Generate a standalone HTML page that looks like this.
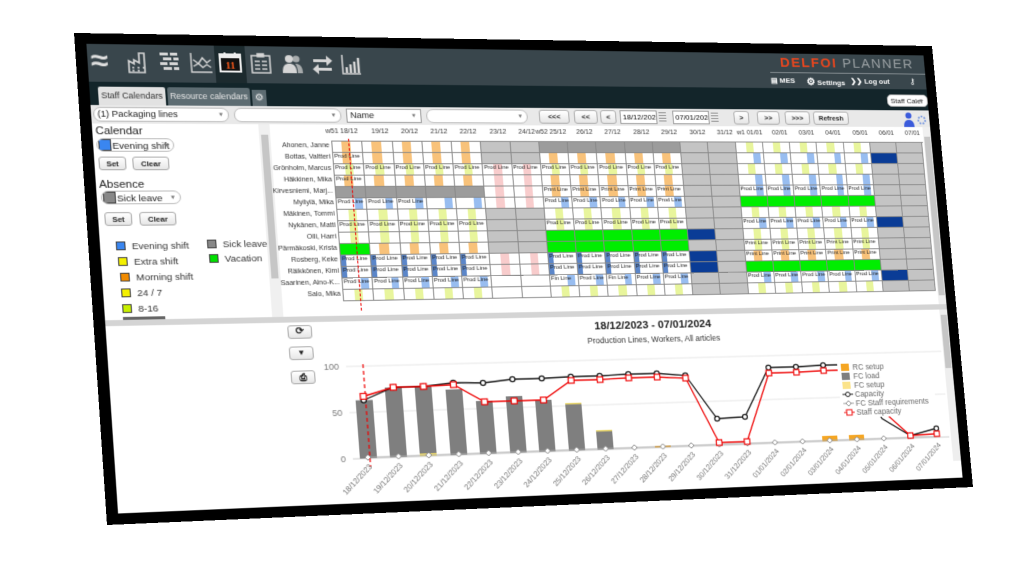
<!DOCTYPE html>
<html><head><meta charset="utf-8">
<style>
html,body{margin:0;padding:0;width:1024px;height:562px;overflow:hidden;background:#fff;font-family:"Liberation Sans",sans-serif}
#c{position:absolute;left:0;top:0;width:900px;height:500px;background:#000;transform-origin:0 0;
transform:matrix3d(1.07178,0.02029,0,0.00012709,0.062864,0.968614,0,-0.000029306,0,0,1,0,74,33,0,1)}
.ab{position:absolute}
#in{position:absolute;left:11px;top:11px;width:878px;height:478px;background:#fff;overflow:hidden}
.dd{position:absolute;background:#fff;border:1px solid #bbb;border-radius:7px;font-size:9px;line-height:13px;padding-left:3px;box-sizing:border-box;color:#222;white-space:nowrap;overflow:hidden}
.dd:after{content:"▾";position:absolute;right:5px;top:0;font-size:7px;color:#777}
.bt{position:absolute;background:linear-gradient(#fff,#e6e6e6);border:1px solid #aaa;border-radius:3px;font-size:7.5px;font-weight:bold;text-align:center;box-sizing:border-box;line-height:13px;color:#222}
.gr{position:absolute;left:242px;top:110px;width:636px;overflow:hidden}
.r{display:grid;grid-template-columns:repeat(21,30.25px);height:12px}
.r i{display:block;width:30.25px;min-width:0;height:12px;box-sizing:border-box;border-right:1px solid #888;border-bottom:1px solid #888;font-style:normal;font-size:6px;line-height:9px;overflow:hidden;white-space:nowrap;color:#222;background:#fff;padding-left:1px}
.r i.a{background:linear-gradient(90deg,#fff 30%,#f8c27a 30%,#f8c27a 62%,#fff 62%)}
.r i.y{background:linear-gradient(90deg,#fff 38%,#e8f59c 38%,#e8f59c 66%,#fff 66%)}
.r i.b{background:linear-gradient(90deg,#fff 62%,#98bdf0 62%,#98bdf0 88%,#fff 88%)}
.r i.p{background:linear-gradient(90deg,#fff 38%,#f8cccc 38%,#f8cccc 66%,#fff 66%)}
.r i.n.t{background:linear-gradient(90deg,#5b86c9 18%,#fff 18%)}
.r i.g{background:#c4c4c4}
.r i.d{background:#9c9c9c}
.r i.v{background:#00ee00}
.r i.n{background:#0a3c96}
.nm{position:absolute;left:170px;width:70px;text-align:right;font-size:7px;color:#333;line-height:12px;white-space:nowrap}
.hd{position:absolute;top:97px;font-size:7px;color:#333;white-space:nowrap}
.lg{position:absolute;font-size:9.5px;color:#333;line-height:11px;white-space:nowrap}
.lg b{display:inline-block;width:7px;height:7px;border:1px solid #444;margin-right:6px;vertical-align:-1px}
.ic{position:absolute;top:18px}
</style></head><body>
<div id="c">
<div id="in"></div>
<div class="ab" style="left:11px;top:11px;width:878px;height:39px;background:#39464c"></div>
<div class="ab" style="left:133px;top:11px;width:30px;height:39px;background:#1c2a2e"></div>
<div class="ab" style="left:11px;top:50px;width:878px;height:24px;background:#13252a"></div>
<div class="ab" style="left:14px;top:14px;font-size:30px;color:#ddd;font-weight:bold;line-height:30px">≈</div>
<svg class="ic" style="left:48px" width="22" height="24" viewBox="0 0 22 24" fill="none" stroke="#d6d6d6" stroke-width="1.6"><path d="M2 22V10l5 3V9l5 3V2h5v20z M5 17h2M10 17h2M15 17h2M5 20h2M10 20h2"/></svg>
<svg class="ic" style="left:79px" width="20" height="22" viewBox="0 0 20 22" fill="#d6d6d6"><rect x="1" y="1" width="8" height="3"/><rect x="11" y="1" width="7" height="3"/><rect x="4" y="6" width="8" height="3"/><rect x="14" y="6" width="5" height="3"/><rect x="1" y="11" width="7" height="3"/><rect x="10" y="11" width="8" height="3"/><rect x="4" y="16" width="8" height="3"/><rect x="14" y="16" width="5" height="3"/></svg>
<svg class="ic" style="left:109px" width="22" height="22" viewBox="0 0 22 22" fill="none" stroke="#d6d6d6" stroke-width="1.4"><path d="M1 1v20h20M3 8l5 4 4-6 4 5 4-3M3 15l5-3 4 4 4-3 4 3"/></svg>
<svg class="ic" style="left:137px;top:17px" width="22" height="22" viewBox="0 0 22 22"><rect x="1" y="3" width="20" height="18" fill="#111" stroke="#eee" stroke-width="2"/><rect x="1" y="3" width="20" height="4" fill="#eee"/><rect x="5" y="1" width="2" height="4" fill="#eee"/><rect x="15" y="1" width="2" height="4" fill="#eee"/><text x="11" y="18" font-size="10" font-weight="bold" fill="#ff5a1a" text-anchor="middle" font-family="Liberation Serif">11</text></svg>
<svg class="ic" style="left:168px" width="20" height="22" viewBox="0 0 20 22" fill="none" stroke="#d6d6d6" stroke-width="1.5"><rect x="1" y="3" width="18" height="18"/><rect x="7" y="1" width="6" height="3" fill="#d6d6d6"/><path d="M4 9h5M11 9h5M4 13h5M11 13h5M4 17h5M11 17h5"/></svg>
<svg class="ic" style="left:198px" width="22" height="22" viewBox="0 0 22 22" fill="#d6d6d6"><circle cx="8" cy="6" r="4"/><path d="M1 21c0-8 3-10 7-10s7 2 7 10z"/><circle cx="15" cy="6" r="3.5" opacity=".7"/><path d="M14 11c4 0 7 2 7 10h-5c0-5-1-8-2-10z" opacity=".7"/></svg>
<svg class="ic" style="left:228px" width="22" height="22" viewBox="0 0 22 22" fill="#d6d6d6"><path d="M2 6h13V2l6 5.5-6 5.5V9H2zM20 15H7v-4l-6 5.5L7 22v-4h13z"/></svg>
<svg class="ic" style="left:258px" width="20" height="22" viewBox="0 0 20 22" fill="none" stroke="#d6d6d6" stroke-width="1.5"><path d="M1 1v20h18"/><path d="M5 20v-6M9 20v-9M13 20v-12M17 20v-16" stroke-width="2.4"/></svg>
<div class="ab" style="left:724px;top:14px;font-size:15px;letter-spacing:1.6px;line-height:16px;white-space:nowrap"><span style="color:#e8461e;font-weight:bold">DELFOI</span><span style="color:#9aa0a3"> PLANNER</span></div>
<div class="ab" style="left:712px;top:32px;width:177px;height:1px;background:#8a9296"></div>
<div class="ab" style="left:712px;top:37px;font-size:8px;color:#fff;font-weight:bold;white-space:nowrap">▤ MES</div>
<div class="ab" style="left:752px;top:36px;font-size:8px;color:#fff;font-weight:bold;white-space:nowrap"><span style="font-size:11px">⚙</span> Settings</div>
<div class="ab" style="left:802px;top:37px;font-size:8px;color:#fff;font-weight:bold;white-space:nowrap">❯❯ Log out</div>
<div class="ab" style="left:870px;top:36px;font-size:9px;color:#fff">⚷</div>
<div class="dd" style="left:842px;top:56px;width:47px;height:14px;font-size:8px;border-radius:5px">Staff Caler</div>
<div class="ab" style="left:19px;top:55px;width:64px;height:19px;background:#e2e2e2;font-size:8.5px;line-height:18px;text-align:center;color:#333;border-radius:2px 2px 0 0;white-space:nowrap">Staff Calendars</div>
<div class="ab" style="left:85px;top:55px;width:80px;height:19px;background:#5d6c72;font-size:8.5px;line-height:18px;text-align:center;color:#e6e6e6;border-radius:2px 2px 0 0;white-space:nowrap;overflow:hidden">Resource calendars</div>
<div class="ab" style="left:167px;top:57px;width:14px;height:17px;background:#5d6c72;font-size:10px;line-height:17px;text-align:center;color:#eee">⚙</div>
<div class="ab" style="left:11px;top:74px;width:878px;height:19px;background:#e9e9e9"></div>
<div class="dd" style="left:13px;top:76px;width:130px;height:15px">(1) Packaging lines</div>
<div class="dd" style="left:148px;top:76px;width:106px;height:15px"></div>
<div class="dd" style="left:259px;top:76px;width:76px;height:15px;border-radius:0;border-color:#999">Name</div>
<div class="dd" style="left:340px;top:76px;width:105px;height:15px"></div>
<div class="bt" style="left:457px;top:76px;width:32px;height:15px">&lt;&lt;&lt;</div>
<div class="bt" style="left:494px;top:76px;width:25px;height:15px">&lt;&lt;</div>
<div class="bt" style="left:522px;top:76px;width:17px;height:15px">&lt;</div>
<div class="ab" style="left:543px;top:76px;width:40px;height:15px;background:#fff;border:1px solid #999;box-sizing:border-box;font-size:8px;line-height:13px;padding-left:2px;white-space:nowrap;overflow:hidden">18/12/2023</div>
<div class="ab" style="left:585px;top:78px;width:8px;height:10px;background:repeating-linear-gradient(#888 0 1px,#eee 1px 3px)"></div>
<div class="ab" style="left:600px;top:76px;width:40px;height:15px;background:#fff;border:1px solid #999;box-sizing:border-box;font-size:8px;line-height:13px;padding-left:2px;white-space:nowrap;overflow:hidden">07/01/2024</div>
<div class="ab" style="left:642px;top:78px;width:8px;height:10px;background:repeating-linear-gradient(#888 0 1px,#eee 1px 3px)"></div>
<div class="bt" style="left:667px;top:76px;width:17px;height:15px">&gt;</div>
<div class="bt" style="left:693px;top:76px;width:25px;height:15px">&gt;&gt;</div>
<div class="bt" style="left:724px;top:76px;width:28px;height:15px">&gt;&gt;&gt;</div>
<div class="bt" style="left:756px;top:76px;width:40px;height:15px">Refresh</div>
<svg class="ab" style="left:858px;top:76px" width="30" height="17" viewBox="0 0 30 17"><circle cx="7" cy="4" r="3.5" fill="#3b5bdb"/><path d="M1 17c0-7 3-8 6-8s6 1 6 8z" fill="#3b5bdb"/><circle cx="22" cy="9" r="4" fill="none" stroke="#7a9ae0" stroke-width="2" stroke-dasharray="2 1.5"/></svg>
<div class="ab" style="left:14px;top:95px;font-size:11px;color:#222">Calendar</div>
<div class="dd" style="left:14px;top:108px;width:74px;height:14px;border-radius:7px;font-size:9.5px;padding-left:1px"><span style="display:inline-block;width:10px;height:10px;background:#3a86f0;border:1px solid #444;vertical-align:-2px;margin-right:1px"></span>Evening shift</div>
<div class="bt" style="left:15px;top:127px;width:26px;height:14px">Set</div>
<div class="bt" style="left:47px;top:127px;width:35px;height:14px">Clear</div>
<div class="ab" style="left:14px;top:150px;font-size:11px;color:#222">Absence</div>
<div class="dd" style="left:15px;top:162px;width:76px;height:14px;font-size:9.5px;padding-left:1px"><span style="display:inline-block;width:10px;height:10px;background:#888;border:1px solid #444;vertical-align:-2px;margin-right:1px"></span>Sick leave</div>
<div class="bt" style="left:17px;top:184px;width:26px;height:14px">Set</div>
<div class="bt" style="left:50px;top:184px;width:35px;height:14px">Clear</div>
<div class="lg" style="left:26px;top:214px"><b style="background:#3a86f0"></b>Evening shift</div>
<div class="lg" style="left:27px;top:230px"><b style="background:#f4f000"></b>Extra shift</div>
<div class="lg" style="left:28px;top:246px"><b style="background:#f08a00"></b>Morning shift</div>
<div class="lg" style="left:28px;top:262px"><b style="background:#f4f000"></b>24 / 7</div>
<div class="lg" style="left:28px;top:278px"><b style="background:#c8f000"></b>8-16</div>
<div class="lg" style="left:113px;top:213px"><b style="background:#888"></b>Sick leave</div>
<div class="lg" style="left:114px;top:228px"><b style="background:#00e000"></b>Vacation</div>
<div class="ab" style="left:28px;top:291px;width:40px;height:3px;background:#666"></div>
<div class="ab" style="left:171px;top:93px;width:11px;height:201px;background:#f0f0f0"></div>
<div class="ab" style="left:173px;top:104px;width:7px;height:150px;background:#c6c6c6"></div>
<div class="hd" style="left:237px">w51 18/12</div><div class="hd" style="left:283px">19/12</div><div class="hd" style="left:313px">20/12</div><div class="hd" style="left:343px">21/12</div><div class="hd" style="left:373px">22/12</div><div class="hd" style="left:404px">23/12</div><div class="hd" style="left:434px">24/12</div><div class="hd" style="left:452px">w52 25/12</div><div class="hd" style="left:495px">26/12</div><div class="hd" style="left:525px">27/12</div><div class="hd" style="left:556px">28/12</div><div class="hd" style="left:586px">29/12</div><div class="hd" style="left:617px">30/12</div><div class="hd" style="left:647px">31/12</div><div class="hd" style="left:669px">w1 01/01</div><div class="hd" style="left:708px">02/01</div><div class="hd" style="left:738px">03/01</div><div class="hd" style="left:768px">04/01</div><div class="hd" style="left:799px">05/01</div><div class="hd" style="left:829px">06/01</div><div class="hd" style="left:859px">07/01</div>
<div class="nm" style="top:110px">Ahonen, Janne</div><div class="nm" style="top:122px">Bottas, Valtteri</div><div class="nm" style="top:134px">Grönholm, Marcus</div><div class="nm" style="top:146px">Häkkinen, Mika</div><div class="nm" style="top:158px">Kirvesniemi, Marj...</div><div class="nm" style="top:170px">Myllylä, Mika</div><div class="nm" style="top:182px">Mäkinen, Tommi</div><div class="nm" style="top:194px">Nykänen, Matti</div><div class="nm" style="top:206px">Olli, Harri</div><div class="nm" style="top:218px">Pärmäkoski, Krista</div><div class="nm" style="top:230px">Rosberg, Keke</div><div class="nm" style="top:242px">Räikkönen, Kimi</div><div class="nm" style="top:254px">Saarinen, Aino-K...</div><div class="nm" style="top:266px">Salo, Mika</div>
<div class="gr" style="border-top:1px solid #888;border-left:1px solid #888">
<div class="r"><i class="a"></i><i class="a"></i><i class="a"></i><i class="a"></i><i class="a"></i><i class="g"></i><i class="g"></i><i class="d"></i><i class="d"></i><i class="d"></i><i class="d"></i><i class="d"></i><i class="g"></i><i class="g"></i><i class="y"></i><i class="y"></i><i class="y"></i><i class="y"></i><i class="y"></i><i class="g"></i><i class="g"></i></div>
<div class="r"><i class="a t">Prod Line</i><i class="a"></i><i class="a"></i><i class="a"></i><i class="a"></i><i class="g"></i><i class="g"></i><i class="a"></i><i class="a"></i><i class="a"></i><i class="a"></i><i class="a"></i><i class="g"></i><i class="g"></i><i class="b"></i><i class="b"></i><i class="b"></i><i class="b"></i><i class="b"></i><i class="n"></i><i class="g"></i></div>
<div class="r"><i class="y t">Prod Line</i><i class="y t">Prod Line</i><i class="y t">Prod Line</i><i class="y t">Prod Line</i><i class="y t">Prod Line</i><i class="p t">Prod Line</i><i class="p t">Prod Line</i><i class="y t">Prod Line</i><i class="y t">Prod Line</i><i class="y t">Prod Line</i><i class="y t">Prod Line</i><i class="y t">Prod Line</i><i class="g"></i><i class="g"></i><i class="y"></i><i class="y"></i><i class="y"></i><i class="y"></i><i class="y"></i><i class="g"></i><i class="g"></i></div>
<div class="r"><i class="a t">Prod Line</i><i class="a"></i><i class="a"></i><i class="a"></i><i class="a"></i><i class="p"></i><i class="p"></i><i class="a"></i><i class="a"></i><i class="a"></i><i class="a"></i><i class="a"></i><i class="g"></i><i class="g"></i><i class="b"></i><i class="b"></i><i class="b"></i><i class="b"></i><i class="b"></i><i class="g"></i><i class="g"></i></div>
<div class="r"><i class="d"></i><i class="d"></i><i class="d"></i><i class="d"></i><i class="d"></i><i class="p"></i><i class="p"></i><i class="a t">Print Line</i><i class="a t">Print Line</i><i class="a t">Print Line</i><i class="a t">Print Line</i><i class="a t">Print Line</i><i class="g"></i><i class="g"></i><i class="b t">Prod Line</i><i class="b t">Prod Line</i><i class="b t">Prod Line</i><i class="b t">Prod Line</i><i class="b t">Prod Line</i><i class="g"></i><i class="g"></i></div>
<div class="r"><i class="b t">Prod Line</i><i class="b t">Prod Line</i><i class="b t">Prod Line</i><i class="b"></i><i class="b"></i><i class="p"></i><i class="p"></i><i class="b t">Prod Line</i><i class="b t">Prod Line</i><i class="b t">Prod Line</i><i class="b t">Prod Line</i><i class="b t">Prod Line</i><i class="g"></i><i class="g"></i><i class="v"></i><i class="v"></i><i class="v"></i><i class="v"></i><i class="v"></i><i class="g"></i><i class="g"></i></div>
<div class="r"><i class="y"></i><i class="y"></i><i class="y"></i><i class="y"></i><i class="y"></i><i class="g"></i><i class="g"></i><i class="y"></i><i class="y"></i><i class="y"></i><i class="y"></i><i class="y"></i><i class="g"></i><i class="g"></i><i class="y"></i><i class="y"></i><i class="y"></i><i class="y"></i><i class="y"></i><i class="g"></i><i class="g"></i></div>
<div class="r"><i class="y t">Prod Line</i><i class="y t">Prod Line</i><i class="y t">Prod Line</i><i class="y t">Prod Line</i><i class="y t">Prod Line</i><i class="g"></i><i class="g"></i><i class="y t">Prod Line</i><i class="y t">Prod Line</i><i class="y t">Prod Line</i><i class="y t">Prod Line</i><i class="y t">Prod Line</i><i class="g"></i><i class="g"></i><i class="b t">Prod Line</i><i class="b t">Prod Line</i><i class="b t">Prod Line</i><i class="b t">Prod Line</i><i class="b t">Prod Line</i><i class="n"></i><i class="g"></i></div>
<div class="r"><i class="y"></i><i class="y"></i><i class="y"></i><i class="y"></i><i class="y"></i><i class="g"></i><i class="g"></i><i class="v"></i><i class="v"></i><i class="v"></i><i class="v"></i><i class="v"></i><i class="n"></i><i class="g"></i><i class="y"></i><i class="y"></i><i class="y"></i><i class="y"></i><i class="y"></i><i class="g"></i><i class="g"></i></div>
<div class="r"><i class="v"></i><i class="a"></i><i class="a"></i><i class="a"></i><i class="a"></i><i class="g"></i><i class="g"></i><i class="v"></i><i class="v"></i><i class="v"></i><i class="v"></i><i class="v"></i><i class="g"></i><i class="g"></i><i class="y t">Print Line</i><i class="y t">Print Line</i><i class="y t">Print Line</i><i class="y t">Print Line</i><i class="y t">Print Line</i><i class="g"></i><i class="g"></i></div>
<div class="r"><i class="n t">Prod Line</i><i class="n t">Prod Line</i><i class="n t">Prod Line</i><i class="n t">Prod Line</i><i class="n t">Prod Line</i><i class="p"></i><i class="p"></i><i class="n t">Prod Line</i><i class="n t">Prod Line</i><i class="n t">Prod Line</i><i class="n t">Prod Line</i><i class="n t">Prod Line</i><i class="n"></i><i class="g"></i><i class="a t">Print Line</i><i class="a t">Print Line</i><i class="a t">Print Line</i><i class="a t">Print Line</i><i class="a t">Print Line</i><i class="g"></i><i class="g"></i></div>
<div class="r"><i class="n t">Prod Line</i><i class="n t">Prod Line</i><i class="n t">Prod Line</i><i class="n t">Prod Line</i><i class="n t">Prod Line</i><i class="p"></i><i class="p"></i><i class="n t">Prod Line</i><i class="n t">Prod Line</i><i class="n t">Prod Line</i><i class="n t">Prod Line</i><i class="n t">Prod Line</i><i class="n"></i><i class="g"></i><i class="v"></i><i class="v"></i><i class="v"></i><i class="v"></i><i class="v"></i><i class="g"></i><i class="g"></i></div>
<div class="r"><i class="b t">Prod Line</i><i class="b t">Prod Line</i><i class="b t">Prod Line</i><i class="b t">Prod Line</i><i class="b t">Prod Line</i><i class="w"></i><i class="w"></i><i class="b t">Fin Line</i><i class="b t">Prod Line</i><i class="b t">Fin Line</i><i class="b t">Prod Line</i><i class="b t">Prod Line</i><i class="g"></i><i class="g"></i><i class="b t">Prod Line</i><i class="b t">Prod Line</i><i class="b t">Prod Line</i><i class="b t">Prod Line</i><i class="b t">Prod Line</i><i class="n"></i><i class="g"></i></div>
<div class="r"><i class="y"></i><i class="y"></i><i class="y"></i><i class="y"></i><i class="y"></i><i class="w"></i><i class="w"></i><i class="y"></i><i class="y"></i><i class="y"></i><i class="y"></i><i class="y"></i><i class="g"></i><i class="g"></i><i class="y"></i><i class="y"></i><i class="y"></i><i class="y"></i><i class="y"></i><i class="g"></i><i class="g"></i></div>
</div>
<div class="ab" style="left:259px;top:108px;width:0;height:181px;border-left:1.2px dashed #e00"></div>
<div class="ab" style="left:880px;top:93px;width:9px;height:201px;background:#f0f0f0"></div>
<div class="ab" style="left:881px;top:104px;width:7px;height:180px;background:#c6c6c6"></div>
<div class="ab" style="left:11px;top:294px;width:878px;height:6px;background:#d4d4d4"></div>
<div class="ab" style="left:880px;top:300px;width:9px;height:170px;background:#eee"></div>
<div class="ab" style="left:881px;top:306px;width:7px;height:60px;background:#c6c6c6"></div>
<div class="bt" style="left:185px;top:303px;width:24px;height:14px;font-size:10px;line-height:12px">⟳</div>
<div class="bt" style="left:185px;top:325px;width:24px;height:14px;font-size:8px;line-height:12px">▼</div>
<div class="bt" style="left:185px;top:350px;width:24px;height:14px;font-size:9px;line-height:12px">⎙</div>
<svg class="ab" style="left:0;top:0" width="900" height="500" viewBox="0 0 900 500" font-family="Liberation Sans, sans-serif">
<text x="560" y="314" font-size="11.5" font-weight="bold" text-anchor="middle" fill="#222">18/12/2023 - 07/01/2024</text>
<text x="560" y="329" font-size="8.5" text-anchor="middle" fill="#333">Production Lines, Workers, All articles</text>
<g stroke="#e6e6e6" stroke-width="1"><path d="M240 347H878M240 395H878"/></g>
<path d="M240 443H878" stroke="#ccc"/>
<g font-size="9" fill="#777" text-anchor="end"><text x="233" y="350">100</text><text x="233" y="398">50</text><text x="233" y="446">0</text></g>
<g fill="#7f7f7f">
<rect x="247" y="382.5" width="17" height="60.5"/><rect x="277" y="370" width="17" height="73"/><rect x="307" y="370" width="17" height="70"/><rect x="338" y="374" width="17" height="69"/><rect x="368" y="387" width="17" height="56"/><rect x="399" y="383" width="17" height="60"/><rect x="429" y="388" width="17" height="55"/><rect x="460" y="393" width="17" height="50"/><rect x="490" y="423" width="17" height="20"/></g>
<g fill="#f0dc6a"><rect x="307" y="440" width="17" height="3"/><rect x="460" y="392" width="17" height="1.5"/><rect x="490" y="422" width="17" height="1.5"/></g>
<g fill="#f5a623"><rect x="551" y="441" width="17" height="2"/><rect x="734" y="437" width="17" height="6"/><rect x="764" y="437" width="17" height="6"/></g>
<path d="M255 442 L864 442" stroke="#aaa" stroke-width="1.2"/>
<g fill="#fff" stroke="#888" stroke-width="1"><path d="M255 439l3 3-3 3-3-3z M285.5 439l3 3-3 3-3-3z M315.9 439l3 3-3 3-3-3z M346.4 439l3 3-3 3-3-3z M376.8 439l3 3-3 3-3-3z M407.3 439l3 3-3 3-3-3z M437.7 439l3 3-3 3-3-3z M468.2 439l3 3-3 3-3-3z M498.6 439l3 3-3 3-3-3z M529.1 439l3 3-3 3-3-3z M559.5 439l3 3-3 3-3-3z M590 439l3 3-3 3-3-3z M620.4 439l3 3-3 3-3-3z M650.9 439l3 3-3 3-3-3z M681.3 439l3 3-3 3-3-3z M711.8 439l3 3-3 3-3-3z M742.2 439l3 3-3 3-3-3z M772.7 439l3 3-3 3-3-3z M803.1 439l3 3-3 3-3-3z"/></g>
<path d="M257 345V452" stroke="#e00" stroke-width="1.2" stroke-dasharray="4 3"/>
<polyline fill="none" stroke="#111" stroke-width="1.3" points="255,382.5 285.5,370 315.9,370 346.4,367 376.8,368 407.3,365 437.7,365 468.2,364 498.6,364 529.1,363 559.5,363 590,366 620.4,414 650.9,413 681.3,360 711.8,360 742.2,359 772.7,359 803.1,420 833.6,440 864,433"/>
<polyline fill="none" stroke="#e00" stroke-width="1.3" points="255,378.5 285.5,370 315.9,370 346.4,369 376.8,388 407.3,388 437.7,388 468.2,368 498.6,368 529.1,367 559.5,367 590,369 620.4,440 650.9,440 681.3,366 711.8,366 742.2,365 772.7,365 803.1,410 833.6,440 864,439"/>
<g fill="#fff" stroke="#111" stroke-width="1.2"><circle cx="255" cy="382.5" r="2.6"/><circle cx="285.5" cy="370" r="2.6"/><circle cx="315.9" cy="370" r="2.6"/><circle cx="346.4" cy="367" r="2.6"/><circle cx="376.8" cy="368" r="2.6"/><circle cx="407.3" cy="365" r="2.6"/><circle cx="437.7" cy="365" r="2.6"/><circle cx="468.2" cy="364" r="2.6"/><circle cx="498.6" cy="364" r="2.6"/><circle cx="529.1" cy="363" r="2.6"/><circle cx="559.5" cy="363" r="2.6"/><circle cx="590" cy="366" r="2.6"/><circle cx="620.4" cy="414" r="2.6"/><circle cx="650.9" cy="413" r="2.6"/><circle cx="681.3" cy="360" r="2.6"/><circle cx="711.8" cy="360" r="2.6"/><circle cx="742.2" cy="359" r="2.6"/><circle cx="833.6" cy="440" r="2.6"/><circle cx="864" cy="433" r="2.6"/></g>
<g fill="#fff" stroke="#e00" stroke-width="1.2"><rect x="252" y="375.5" width="6" height="6"/><rect x="282.5" y="367" width="6" height="6"/><rect x="312.9" y="367" width="6" height="6"/><rect x="343.4" y="366" width="6" height="6"/><rect x="373.8" y="385" width="6" height="6"/><rect x="404.3" y="385" width="6" height="6"/><rect x="434.7" y="385" width="6" height="6"/><rect x="465.2" y="365" width="6" height="6"/><rect x="495.6" y="365" width="6" height="6"/><rect x="526.1" y="364" width="6" height="6"/><rect x="556.5" y="364" width="6" height="6"/><rect x="587" y="366" width="6" height="6"/><rect x="617.4" y="437" width="6" height="6"/><rect x="647.9" y="437" width="6" height="6"/><rect x="678.3" y="363" width="6" height="6"/><rect x="708.8" y="363" width="6" height="6"/><rect x="739.2" y="362" width="6" height="6"/><rect x="830.6" y="437" width="6" height="6"/><rect x="861" y="436" width="6" height="6"/></g>
<rect x="758" y="356" width="108" height="62" fill="#fff"/>
<g font-size="8.5" fill="#666">
<rect x="762" y="358" width="9" height="8" fill="#f5a623"/><text x="775" y="365">RC setup</text>
<rect x="762" y="368" width="9" height="8" fill="#7f7f7f"/><text x="775" y="375">FC load</text>
<rect x="762" y="378" width="9" height="8" fill="#fbe38a"/><text x="775" y="385">FC setup</text>
<path d="M761 392h12" stroke="#111"/><circle cx="767" cy="392" r="2.5" fill="#fff" stroke="#111"/><text x="775" y="395">Capacity</text>
<path d="M761 402h12" stroke="#999"/><path d="M767 399l3 3-3 3-3-3z" fill="#fff" stroke="#888"/><text x="775" y="405">FC Staff requirements</text>
<path d="M761 412h12" stroke="#e00"/><rect x="764" y="409" width="6" height="6" fill="#fff" stroke="#e00"/><text x="775" y="415">Staff capacity</text>
</g>
<g font-size="8" fill="#777" text-anchor="end">
<text transform="translate(259,452) rotate(-45)">18/12/2023</text><text transform="translate(289.5,452) rotate(-45)">19/12/2023</text><text transform="translate(319.9,452) rotate(-45)">20/12/2023</text><text transform="translate(350.4,452) rotate(-45)">21/12/2023</text><text transform="translate(380.8,452) rotate(-45)">22/12/2023</text><text transform="translate(411.3,452) rotate(-45)">23/12/2023</text><text transform="translate(441.7,452) rotate(-45)">24/12/2023</text><text transform="translate(472.2,452) rotate(-45)">25/12/2023</text><text transform="translate(502.6,452) rotate(-45)">26/12/2023</text><text transform="translate(533.1,452) rotate(-45)">27/12/2023</text><text transform="translate(563.5,452) rotate(-45)">28/12/2023</text><text transform="translate(594,452) rotate(-45)">29/12/2023</text><text transform="translate(624.4,452) rotate(-45)">30/12/2023</text><text transform="translate(654.9,452) rotate(-45)">31/12/2023</text><text transform="translate(685.3,452) rotate(-45)">01/01/2024</text><text transform="translate(715.8,452) rotate(-45)">02/01/2024</text><text transform="translate(746.2,452) rotate(-45)">03/01/2024</text><text transform="translate(776.7,452) rotate(-45)">04/01/2024</text><text transform="translate(807.1,452) rotate(-45)">05/01/2024</text><text transform="translate(837.6,452) rotate(-45)">06/01/2024</text><text transform="translate(868,452) rotate(-45)">07/01/2024</text>
</g>
</svg>
</div>
</body></html>
